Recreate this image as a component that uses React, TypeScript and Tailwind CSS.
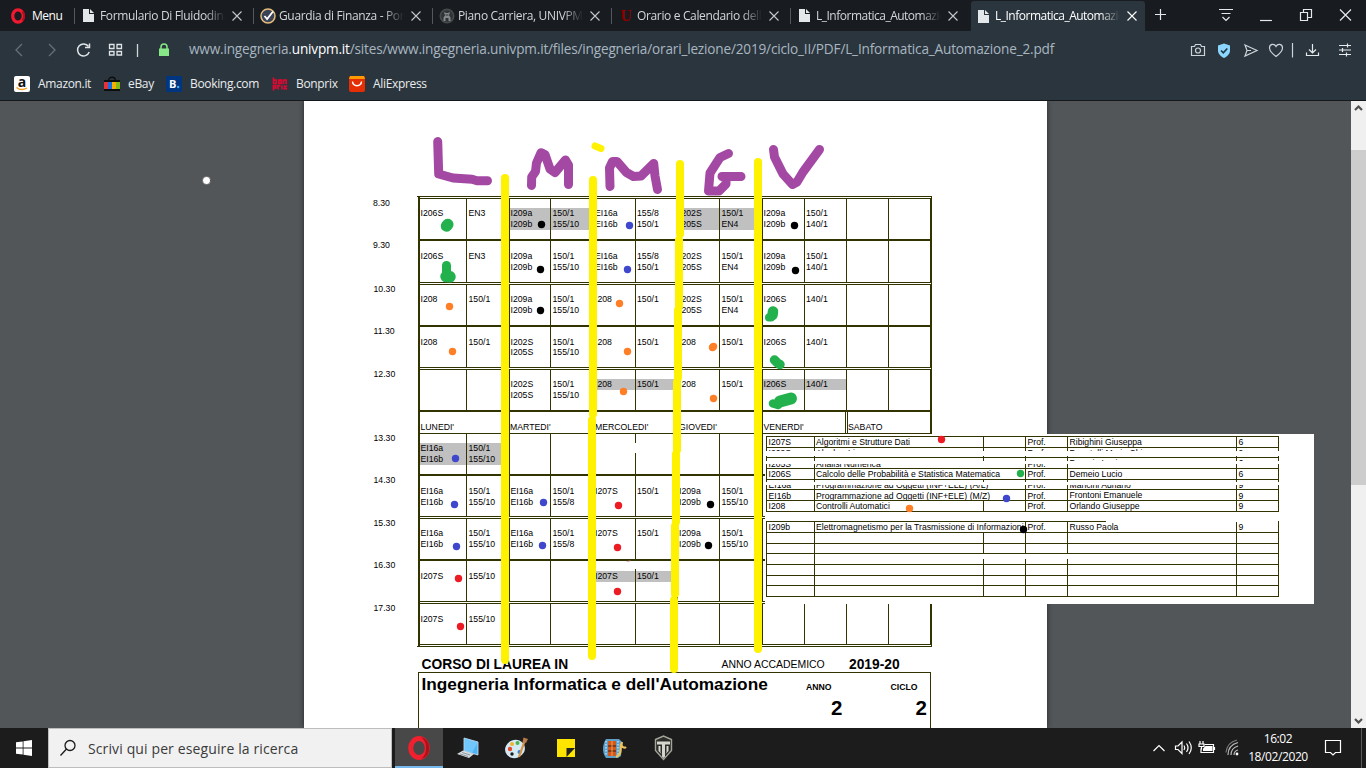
import type { ReactNode } from "react";

/* ---------- Browser chrome ---------- */

function DocIcon() {
  return (
    <svg width="14" height="15" viewBox="0 0 14 15">
      <path d="M1 1h6v5h5v8H1z" fill="#e3e7ea" />
      <path d="M8 1l4 4H8z" fill="#e3e7ea" />
    </svg>
  );
}

function GuardiaIcon() {
  return (
    <svg width="16" height="16" viewBox="0 0 16 16">
      <circle cx="8" cy="8" r="7" fill="#3b4257" stroke="#e3bd7c" strokeWidth="1.5" />
      <path d="M4.500 8l2.600 3L13 3.500" fill="none" stroke="#fff" strokeWidth="1.8" />
    </svg>
  );
}

function UnivpmIcon() {
  return (
    <svg width="16" height="16" viewBox="0 0 16 16">
      <circle cx="8" cy="8" r="7.500" fill="#46494c" />
      <circle cx="8" cy="8" r="5.800" fill="#303335" />
      <path d="M4.500 13V9.500l1.500-2L5 4l2 1h2l2-1-1 3.500 1.500 2V13h-2v-3h-3v3z" fill="#85898c" />
      <path d="M6.500 7h3" stroke="#303335" />
    </svg>
  );
}

function UIcon() {
  return <span className="block w-[14px] text-center font-['Liberation_Serif',serif] text-[16px] leading-[15px] font-bold text-[#8e0000]">U</span>;
}

function CloseX() {
  return (
    <svg width="10" height="10" viewBox="0 0 10 10" className="shrink-0">
      <path d="M.5.5l9 9M9.500.5l-9 9" stroke="currentColor" strokeWidth="1.1" fill="none" />
    </svg>
  );
}

function Tab({ icon, title, tight }: { icon: ReactNode; title: string; tight?: boolean }) {
  return (
    <div className="flex h-[31px] w-[179px] shrink-0 items-center">
      <div className="h-[16px] w-px bg-[#54585b]" />
      <div className="ml-[6px] flex w-[16px] justify-center">{icon}</div>
      <div className={`ml-[3px] w-[125px] overflow-hidden text-[12px] whitespace-nowrap text-[#d3d7da] [mask-image:linear-gradient(to_right,black_84%,transparent_100%)] ${tight ? "tracking-[-0.5px]" : "tracking-[-0.35px]"}`}>{title}</div>
      <div className="ml-[7px] text-[#c5c9cc]"><CloseX /></div>
    </div>
  );
}

function TabBar() {
  return (
    <div className="flex h-[31px] bg-[#181b1f] text-white">
      <div className="flex w-[74px] shrink-0 items-center pl-[10px] text-[12px]">
        <svg width="16" height="16" viewBox="0 0 16 16">
          <ellipse cx="8" cy="8" rx="5.300" ry="6.200" fill="none" stroke="#f0192f" strokeWidth="3.300" />
          <path d="M12.500 3.500a7 7 0 0 1 0 9" fill="none" stroke="#a8101f" strokeWidth="2" />
        </svg>
        <span className="ml-[6px] tracking-[-0.5px]">Menu</span>
      </div>
      <Tab icon={<DocIcon />} title="Formulario Di Fluidodinam" />
      <Tab icon={<GuardiaIcon />} title="Guardia di Finanza - Porta" />
      <Tab icon={<UnivpmIcon />} title="Piano Carriera, UNIVPM -" />
      <Tab icon={<UIcon />} title="Orario e Calendario delle" />
      <Tab icon={<DocIcon />} title="L_Informatica_Automazio" tight />
      <div className="mt-px ml-[2px] flex h-[30px] w-[174px] shrink-0 items-center rounded-t-[3px] bg-[#2b353d]">
        <div className="ml-[6px]"><DocIcon /></div>
        <div className="ml-[4px] w-[125px] overflow-hidden text-[12px] tracking-[-0.5px] whitespace-nowrap text-white [mask-image:linear-gradient(to_right,black_84%,transparent_100%)]">L_Informatica_Automazio</div>
        <div className="ml-[7px]"><CloseX /></div>
      </div>
      <svg width="221" height="31" viewBox="1145 0 221 31" fill="none" stroke="#e6e9eb" strokeWidth="1.200" className="shrink-0">
        <path d="M1155 14.500h11M1160.500 9v11" />
        <path d="M1219 9.500h14M1221.500 13.500h9M1222.500 17l3.500 3.500 3.500-3.500" />
        <path d="M1260 20.500h12" />
        <path d="M1300.500 12.500h7v8h-7zM1303.500 12.500v-3h8v8h-3.500" />
        <path d="M1340 9.500l11 11M1351 9.500l-11 11" />
      </svg>
    </div>
  );
}

function AddressBar() {
  return (
    <div className="flex h-[37px] items-center">
      <svg width="189" height="37" viewBox="0 31 189 37" fill="none" strokeWidth="1.300" className="shrink-0">
        <path d="M22 44l-6 6 6 6M49 44l6 6-6 6" stroke="#65707a" />
        <path d="M88.500 46.500a6 6 0 1 0 .7 5.500" stroke="#dfe5e9" strokeWidth="1.500" />
        <path d="M89.500 43.500v4h-4.500" stroke="#dfe5e9" strokeWidth="1.500" />
        <path d="M109.500 44.500h4.500v4h-4.500zM117 44.500h4.500v4H117zM109.500 51.500h4.500v3.500h-4.500zM117 51.500h4.500v3.500H117z" stroke="#dfe5e9" />
        <path d="M137.500 44v13" stroke="#cfd6db" />
        <rect x="159" y="48.500" width="10" height="7.500" fill="#86e886" />
        <path d="M161 50v-3a3 3 0 0 1 6 0v3" stroke="#86e886" strokeWidth="1.500" />
      </svg>
      <div className="w-[990px] text-[13.600px] tracking-[-0.18px] whitespace-nowrap text-[#a8b6c1]">
        www.ingegneria.<span className="text-white">univpm.it</span>/sites/www.ingegneria.univpm.it/files/ingegneria/orari_lezione/2019/ciclo_II/PDF/L_Informatica_Automazione_2.pdf
      </div>
      <svg width="187" height="37" viewBox="1179 31 187 37" fill="none" stroke="#cdd4d9" strokeWidth="1.200" className="shrink-0">
        <path d="M1191.500 46.500h3l1-2h5l1 2h3v9h-13z" />
        <circle cx="1198" cy="50.500" r="2.500" />
        <path d="M1224 43.500l6 2v5c0 3.500-3 6-6 7.500-3-1.500-6-4-6-7.500v-5z" fill="#8cd7ff" stroke="none" />
        <path d="M1221 50.500l2.300 2.300 4-4.300" stroke="#20333f" strokeWidth="1.600" />
        <path d="M1245 45l12 5.500-12 5.500 2-5.500zM1247 50.500h4" />
        <path d="M1276 56.500c-4-3-6.500-5.500-6.500-8.500 0-4.500 5-4.500 6.500-1.500 1.500-3 6.500-3 6.500 1.500 0 3-2.500 5.500-6.500 8.500z" />
        <path d="M1292.500 43v14.500" />
        <path d="M1312.500 44v8.500M1309 49.500l3.500 3.500 3.500-3.500M1306.500 52.500v3h12v-3" stroke="#e6eaed" />
        <path d="M1339 45.500h12M1339 50h12M1339 54.500h12M1347.500 43.500v4M1342.500 48v4M1346.500 52.500v4" stroke="#e6eaed" />
      </svg>
    </div>
  );
}

function Bookmarks() {
  return (
    <div className="flex h-[32px] items-center pl-[14px] text-[12px] tracking-[-0.33px] whitespace-nowrap text-[#e9eced]">
      <div className="flex w-[90px] items-center gap-[8px]">
        <svg width="16" height="16" viewBox="0 0 16 16">
          <rect width="16" height="16" rx="2" fill="#fff" />
          <text x="8" y="10.500" textAnchor="middle" fontSize="14" fontWeight="bold" fontFamily="Open Sans" letterSpacing="0" fill="#111">a</text>
          <path d="M2.500 11.500c3 2.500 7 2.500 10.500.5" stroke="#f59b1f" strokeWidth="1.400" fill="none" />
        </svg>
        <span>Amazon.it</span>
      </div>
      <div className="flex w-[62px] items-center gap-[8px]">
        <svg width="16" height="16" viewBox="0 0 16 16">
          <path d="M4.500 5c0-5 7-5 7 0" stroke="#0c0d0e" fill="none" strokeWidth="1.300" />
          <path d="M0 4h16v11H0z" fill="#0c0d0e" />
          <path d="M0 6h4v7H0z" fill="#e53238" /><path d="M4 6h4v7H4z" fill="#1c6be0" /><path d="M8 6h4v7H8z" fill="#f5af02" /><path d="M12 6h4v7h-4z" fill="#86b817" />
        </svg>
        <span>eBay</span>
      </div>
      <div className="flex w-[106px] items-center gap-[8px]">
        <svg width="16" height="16" viewBox="0 0 16 16">
          <rect width="16" height="16" rx="1.500" fill="#003580" />
          <text x="3" y="12" fontSize="11" fontWeight="bold" fontFamily="Open Sans" fill="#fff">B</text>
          <circle cx="12.200" cy="11" r="1.200" fill="#35b5f0" />
        </svg>
        <span>Booking.com</span>
      </div>
      <div className="flex w-[77px] items-center gap-[8px]">
        <svg width="16" height="16" viewBox="0 0 16 16" fill="none" stroke="#dc0a32" strokeWidth="1.700">
          <path d="M1.500 1.500v6h2.700v-3.300H1.500M6.800 4.200h2.500v3.300H6.800zM11.500 8.300V4.200h2.700v4.100" />
          <path d="M1.500 14.500v-4.800h2.300V12H1.500M6 13.500V9.700h2.500M10 9.500v4M11.800 9.500l3 4M14.800 9.500l-3 4" />
        </svg>
        <span>Bonprix</span>
      </div>
      <div className="flex items-center gap-[8px]">
        <svg width="16" height="16" viewBox="0 0 16 16">
          <rect width="16" height="16" rx="2" fill="#e62e04" />
          <path d="M1 0h14l1 3H0z" fill="#ff9900" />
          <path d="M3.500 5.500c.5 5.500 8.500 5.500 9 0" stroke="#fff" strokeWidth="1.500" fill="none" />
        </svg>
        <span>AliExpress</span>
      </div>
    </div>
  );
}

/* ---------- Timetable ---------- */

type Slot = { code: string[]; room: string[]; gray?: boolean };
type Row = { h: string; border: string; lead: string; gap?: boolean; slots: (Slot | null)[] };

const s = (code: string, room: string, gray = false): Slot => ({ code: code.split(","), room: room.split(","), gray });

const first = "border-t border-b-2 pt-[9px]";
const second = "border-b pt-[10px]";

const upper: Row[] = [
  { h: "h-[43px]", border: first, lead: "leading-[11px]", slots: [s("I206S", "EN3"), s("I209a,I209b", "150/1,155/10", true), s("EI16a,EI16b", "155/8,150/1"), s("I202S,I205S", "150/1,EN4", true), s("I209a,I209b", "150/1,140/1"), null] },
  { h: "h-[42px]", border: second, lead: "leading-[11px]", gap: true, slots: [s("I206S", "EN3"), s("I209a,I209b", "150/1,155/10"), s("EI16a,EI16b", "155/8,150/1"), s("I202S,I205S", "150/1,EN4"), s("I209a,I209b", "150/1,140/1"), null] },
  { h: "h-[43px]", border: first, lead: "leading-[11px]", slots: [s("I208", "150/1"), s("I209a,I209b", "150/1,155/10"), s("I208", "150/1"), s("I202S,I205S", "150/1,EN4"), s("I206S", "140/1"), null] },
  { h: "h-[41px]", border: second, lead: "leading-[10px]", gap: true, slots: [s("I208", "150/1"), s("I202S,I205S", "150/1,155/10"), s("I208", "150/1"), s("I208", "150/1"), s("I206S", "140/1"), null] },
  { h: "h-[43px]", border: first, lead: "leading-[11px]", slots: [null, s("I202S,I205S", "150/1,155/10"), s("I208", "150/1", true), s("I208", "150/1"), s("I206S", "140/1", true), null] },
];

const lower: Row[] = [
  { h: "h-[43px]", border: first, lead: "leading-[11px]", slots: [s("EI16a,EI16b", "150/1,155/10", true), null, null, null, null, null] },
  { h: "h-[41px]", border: second, lead: "leading-[11px]", gap: true, slots: [s("EI16a,EI16b", "150/1,155/10"), s("EI16a,EI16b", "150/1,155/8"), s("I207S", "150/1"), s("I209a,I209b", "150/1,155/10"), null, null] },
  { h: "h-[43px]", border: first, lead: "leading-[11px]", slots: [s("EI16a,EI16b", "150/1,155/10"), s("EI16a,EI16b", "150/1,155/8"), s("I207S", "150/1"), s("I209a,I209b", "150/1,155/10"), null, null] },
  { h: "h-[41px]", border: second, lead: "leading-[11px]", gap: true, slots: [s("I207S", "155/10"), null, s("I207S", "150/1", true), null, null, null] },
  { h: "h-[42px]", border: "border-t border-b pt-[10px]", lead: "leading-[11px]", gap: true, slots: [s("I207S", "155/10"), null, null, null, null, null] },
];

const codePad = ["pl-[0.5px]", "pl-[0.5px]", "pl-px", "pl-px", "pl-[0.5px]", ""];
const roomPad = ["pl-[1.5px]", "pl-[1.5px]", "pl-px", "pl-[1.5px]", "pl-px", ""];

function Half({ lines, gray, pad, border, lead }: { lines: string[]; gray?: boolean; pad: string; border: string; lead: string }) {
  return (
    <div className={`border-r border-[#333300] ${border}`}>
      {lines.map((t, i) => (
        <div key={i} className={`${pad} ${lead} ${gray ? "bg-[#c0c0c0]" : ""}`}>{t}</div>
      ))}
    </div>
  );
}

function TimeRow({ row }: { row: Row }) {
  return (
    <>
      <div className={`grid grid-cols-[47px_43px_41px_43px_42px_42px_42px_43px_42px_42px_42px_42px] ${row.h}`}>
        {row.slots.flatMap((slot, i) => [
          <Half key={`c${i}`} lines={slot ? slot.code : []} gray={slot?.gray} pad={codePad[i]} border={row.border} lead={row.lead} />,
          <Half key={`r${i}`} lines={slot ? slot.room : []} gray={slot?.gray} pad={roomPad[i]} border={row.border} lead={row.lead} />,
        ])}
      </div>
      {row.gap && <div className="h-px" />}
    </>
  );
}

function Timetable() {
  return (
    <div className="w-[514px] border-t border-r border-b border-l-2 border-[#333300]">
      <div className="h-px" />
      {upper.map((r, i) => <TimeRow key={i} row={r} />)}
      <div className="grid h-[20px] grid-cols-[89px_85px_84px_84px_84px_1px_84px] leading-[11px]">
        <div className="border-b border-[#333300] pt-[10px] pl-[0.5px]">LUNEDI'</div>
        <div className="border-b border-l border-[#333300] pt-[10px]">MARTEDI'</div>
        <div className="border-b border-[#333300] pt-[10px] pl-px">MERCOLEDI'</div>
        <div className="border-b border-[#333300] pt-[10px] pl-px">GIOVEDI'</div>
        <div className="border-x border-b border-[#333300] pt-[10px] pl-[0.5px]">VENERDI'</div>
        <div />
        <div className="border-x border-b border-[#333300] pt-[10px]">SABATO</div>
      </div>
      <div className="h-px" />
      {lower.map((r, i) => <TimeRow key={i} row={r} />)}
    </div>
  );
}

function Hours() {
  return (
    <div className="w-[114px] pl-[69px]">
      <div className="h-[42px] leading-[11px]">8.30</div>
      <div className="h-[44px] leading-[11px]">9.30</div>
      <div className="h-[42px] pl-[0.5px] leading-[11px]">10.30</div>
      <div className="h-[43px] pl-[0.5px] leading-[11px]">11.30</div>
      <div className="h-[64px] pl-[0.5px] leading-[11px]">12.30</div>
      <div className="h-[42px] pl-[0.5px] leading-[11px]">13.30</div>
      <div className="h-[43px] pl-[0.5px] leading-[11px]">14.30</div>
      <div className="h-[42px] pl-[0.5px] leading-[11px]">15.30</div>
      <div className="h-[43px] pl-[0.5px] leading-[11px]">16.30</div>
      <div className="h-[11px] pl-[0.5px] leading-[11px]">17.30</div>
    </div>
  );
}

function PdfPage() {
  return (
    <div className="ml-[304px] h-[627px] w-[743px] bg-white shadow-[0_0_5px_rgba(0,0,0,0.55)]">
      <div className="flex h-[551px] text-[8.700px] text-black">
        <div className="w-[114px] pt-[97px]"><Hours /></div>
        <div className="pt-[95px]"><Timetable /></div>
      </div>
      <div className="flex h-[20px] pt-[5px] pl-[117.500px] leading-[16px] whitespace-nowrap text-black">
        <div className="w-[300px] text-[13.800px] font-bold">CORSO DI LAUREA IN</div>
        <div className="w-[127.500px] text-[10.450px]">ANNO ACCADEMICO</div>
        <div className="text-[13.800px] font-bold">2019-20</div>
      </div>
      <div className="ml-[114px] flex h-[56px] w-[513px] border-x border-t border-[#333300] pl-[2.500px] font-bold whitespace-nowrap text-black">
        <div className="w-[384.500px] pt-[2px] text-[17.250px] leading-[19px]">Ingegneria Informatica e dell'Automazione</div>
        <div className="w-[84.500px] pt-[9px]">
          <div className="text-[8.700px] leading-[11px]">ANNO</div>
          <div className="pt-[4px] pl-[25px] text-[20.500px] leading-[22px]">2</div>
        </div>
        <div className="pt-[9px]">
          <div className="text-[8.700px] leading-[11px]">CICLO</div>
          <div className="pt-[4px] pl-[25px] text-[20.500px] leading-[22px]">2</div>
        </div>
      </div>
    </div>
  );
}

/* ---------- Course legend ---------- */

type Course = { box: string; text?: string; side?: string; cells?: [string, string, string, string]; split?: boolean; bare?: boolean };

const courses: Course[] = [
  { box: "h-[12px] border-y", text: "leading-[11px]", cells: ["I207S", "Algoritmi e Strutture Dati", "Ribighini Giuseppa", "6"], split: true },
  { box: "h-[3px]", text: "leading-[11px]", cells: ["I209S", "Algebra Lineare", "Donatelli Maria Chi", "9"], split: true },
  { box: "h-[5px]", bare: true },
  { box: "h-[2px] border-b", split: true },
  { box: "h-[3px]", text: "leading-[11px]", cells: ["", "", "Demeio Lucio", "6"], split: true },
  { box: "h-[3px]", bare: true },
  { box: "h-[5px] border-b", text: "leading-[11px] -mt-[5px]", cells: ["I205S", "Analisi Numerica", "", ""] },
  { box: "h-[11px] border-b", text: "leading-[11px]", cells: ["I206S", "Calcolo delle Probabilità e Statistica Matematica", "Demeio Lucio", "6"] },
  { box: "h-[2px]", split: true },
  { box: "h-[3px]", bare: true },
  { box: "h-[5px] border-b", text: "leading-[11px] -mt-[5px]", cells: ["EI16a", "Programmazione ad Oggetti (INF+ELE) (A/L)", "Mancini Adriano", "9"] },
  { box: "h-[11px] border-b", text: "leading-[11px] pt-px", side: "leading-[11px]", cells: ["EI16b", "Programmazione ad Oggetti (INF+ELE) (M/Z)", "Frontoni Emanuele", "9"] },
  { box: "h-[11px] border-b", text: "leading-[11px]", cells: ["I208", "Controlli Automatici", "Orlando Giuseppe", "9"], split: true },
  { box: "h-[9px]", bare: true },
  { box: "h-[12px] border-y", text: "leading-[11px]", cells: ["I209b", "Elettromagnetismo per la Trasmissione di Informazioni", "Russo Paola", "9"] },
  { box: "h-[11px] border-b", split: true },
  { box: "h-[10px] border-b", split: true },
  { box: "h-[11px] border-b", split: true },
  { box: "h-[11px] border-b", split: true },
  { box: "h-[10px] border-b", split: true },
  { box: "h-[11px] border-b", split: true },
];

function CourseRow({ c }: { c: Course }) {
  if (c.bare) return <div className={c.box} />;
  const t = c.text ?? "";
  const v = c.cells ?? ["", "", "", ""];
  return (
    <div className={`grid w-[513px] grid-cols-[48px_169px_42px_42px_169px_43px] overflow-hidden border-[#333300] whitespace-nowrap ${c.box}`}>
      <div className="border-l border-[#333300]"><div className={`pl-[1.500px] ${t}`}>{v[0]}</div></div>
      <div className="border-l border-[#333300]"><div className={`pl-px ${t}`}>{v[1]}</div></div>
      <div className={c.split ? "border-l border-[#333300]" : ""} />
      <div className="border-l border-[#333300] bg-white"><div className={`pl-[1.500px] ${t}`}>{v[0] ? "Prof." : ""}</div></div>
      <div className="border-l border-[#333300]"><div className={`pl-[1.500px] ${c.side ?? t}`}>{v[2]}</div></div>
      <div className="border-x border-[#333300]"><div className={`pl-[1.500px] ${t}`}>{v[3]}</div></div>
    </div>
  );
}

function Legend() {
  return (
    <div className="absolute top-[333px] left-[765px] h-[170px] w-[549px] bg-white pt-[2px] pl-px text-[8.650px] text-black">
      {courses.map((c, i) => <CourseRow key={i} c={c} />)}
    </div>
  );
}

/* ---------- Hand-drawn marks ---------- */

const dots: [string, number[][]][] = [
  ["#000000", [[541.5, 224.5], [540.5, 269.5], [540.5, 310.5], [794.5, 225.5], [795.5, 270.5], [710.5, 504.5], [708.5, 545.5], [1023.5, 529.5]]],
  ["#3f48cc", [[629.5, 225.5], [627.5, 269.5], [455.5, 458.5], [454.5, 504.5], [543.5, 502.5], [456.5, 546.5], [542.5, 545.5], [1006.5, 498.5]]],
  ["#ff7f27", [[449.5, 306.5], [619.5, 303.5], [452.5, 351.5], [627.5, 351.5], [712.5, 347.5], [713.5, 346.5], [623.5, 391.5], [713.5, 398.5], [909.5, 508.5]]],
  ["#ed1c24", [[618.5, 505.5], [617.5, 547.5], [617.5, 591.5], [458.5, 578.5], [460.5, 626.5], [941.5, 439.5]]],
  ["#22b14c", [[1020.5, 473.5]]],
];

function Marks() {
  return (
    <svg className="absolute top-0 left-0" width="1351" height="627" viewBox="0 101 1351 627" fill="none" strokeLinecap="round" strokeLinejoin="round">
      <g fill="#ffffff">
        <rect x="635" y="443" width="1" height="10" />
        <rect x="635" y="561" width="1" height="8" />
        <rect x="983" y="554" width="1" height="5" />
        <rect x="1025" y="554" width="1" height="5" />
        <rect x="1067" y="554" width="1" height="5" />
        <rect x="1106" y="521" width="172" height="1" />
      </g>
      <path d="M417 196.500h2M417 646.500h2" stroke="#333300" strokeLinecap="butt" />
      <path d="M627 561.500l3-.5" stroke="#d9958c" strokeWidth=".8" />
      <g stroke="#fff200" strokeWidth="8">
        <path d="M505 178V660" />
        <path d="M593 180V414M592 420V656" />
        <path d="M680 164V234M679 240V306M678 310V378M677 382V450M676 454V522M675 526V594M674 600V669" />
        <path d="M758 162V649" />
        <path d="M595 146l6 2.500" strokeWidth="7" />
      </g>
      <g stroke="#a349a4" strokeWidth="9">
        <path d="M437.700 141.500L438.700 174L444 175.500L453 178L472 179.300L477 180.800H487.500" />
        <path d="M531.500 185.500L531.700 177L535.500 171.500L536.500 163L541 152.700L545 154.500L550 169L555 172.500L565.500 160L568.500 165V184.500" />
        <path d="M610 186.500L609.500 168L612.500 161.500L617 161.500L626.500 172.500L633.500 176.500L641 176L653.700 163.500L655 176L657.500 189.500" />
        <path d="M728.500 153.500L720 157.500L710 173L708.500 191H719L726 184V177L722 176.500H741" />
        <path d="M773.500 149.500L774.500 157L783 174L792.500 184.500L797 182L803 172L819.500 149.500" />
      </g>
      <g stroke="#22b14c">
        <path d="M446.500 226l1.300-1.500" strokeWidth="11.500" />
        <path d="M446.500 265.500v9" strokeWidth="9" />
        <path d="M446 276.500l4 .3" strokeWidth="11.500" />
        <path d="M773 311.500l-.5 3.500" strokeWidth="10.500" />
        <path d="M769 317.500h2" strokeWidth="8" />
        <path d="M774.500 360l3 3M779 364l1 .5" strokeWidth="9.500" />
        <path d="M773 403.500l5 1.500" strokeWidth="8.500" />
        <path d="M780 401.500l11-3" strokeWidth="12" />
      </g>
      {dots.map(([color, pts]) => pts.map(([x, y]) => <circle key={`${x}-${y}`} cx={x} cy={y} r="3.700" fill={color} />))}
      <circle cx="206.500" cy="180.500" r="4" fill="#fff" stroke="#3f4245" strokeWidth=".6" />
    </svg>
  );
}

function Scrollbar() {
  return (
    <div className="flex h-[627px] w-[15px] flex-col items-center bg-[#f0f0f0]">
      <svg width="15" height="49" viewBox="0 0 15 49"><path d="M4 9l3.500-3.500L11 9" fill="none" stroke="#505050" strokeWidth="2.200" /></svg>
      <div className="h-[335px] w-[15px] bg-[#cdcdcd]" />
      <div className="grow" />
      <svg width="15" height="15" viewBox="0 0 15 15"><path d="M4 6l3.500 3.500L11 6" fill="none" stroke="#505050" strokeWidth="2.200" /></svg>
    </div>
  );
}

/* ---------- Taskbar ---------- */

function Taskbar() {
  return (
    <div className="flex h-[40px] bg-[#1c1c1c] font-['Open_Sans',sans-serif]">
      <div className="flex w-[48px] items-center justify-center">
        <svg width="16" height="16" viewBox="0 0 16 16" fill="#fff"><path d="M0 2.300l6.700-.9v6.200H0zM7.500 1.300L16 .1v7.500H7.500zM0 8.400h6.700v6.200L0 13.700zM7.500 8.400H16v7.500l-8.500-1.200z" /></svg>
      </div>
      <div className="flex w-[344px] items-center border border-[#bdbdbd] bg-[#f1f1f1]">
        <svg width="18" height="18" viewBox="0 0 18 18" className="ml-[10px]" fill="none" stroke="#1a1a1a" strokeWidth="1.300"><circle cx="11" cy="6.500" r="5" /><path d="M7.500 10L1.500 16.500" /></svg>
        <span className="ml-[11px] text-[15px] tracking-[-0.310px] text-[#3a3a3a]"><span className="text-[14px] tracking-[0.120px]">Scrivi qui per eseguire la ricerca</span></span>
      </div>
      <div className="ml-[3px] flex w-[48px] items-center justify-center border-b-2 border-[#76b9ed] bg-[#484848] pt-[2px]">
        <svg width="24" height="24" viewBox="0 0 24 24"><ellipse cx="12" cy="12" rx="8.300" ry="9.500" fill="none" stroke="#f0202f" strokeWidth="5" /><path d="M14 1.200c11 1.500 11 20 0 21.600 4-3 5-6.500 5-10.800s-1-7.800-5-10.800z" fill="#b01019" /></svg>
      </div>
      <svg width="240" height="40" viewBox="443 728 240 40">
        <path d="M464 738l14 4v13l-14-4z" fill="#4db4f5" stroke="#d7e6f0" strokeWidth=".8" />
        <path d="M464 738l14 4-6 11-8-2z" fill="#8bd2ff" opacity=".6" />
        <path d="M457 754l6-3.500 11 3.500-5 4z" fill="#d4dade" /><path d="M460 754l8 2.500M462 752.500l8 2.500" stroke="#80898f" strokeWidth=".8" />
        <ellipse cx="515" cy="749" rx="10" ry="9" fill="#d5e9f5" transform="rotate(-20 515 749)" />
        <circle cx="510" cy="749" r="2.200" fill="#e24a2e" /><circle cx="512" cy="744" r="2" fill="#f3b32c" /><circle cx="517.500" cy="743" r="2" fill="#4db34a" /><circle cx="519.500" cy="752" r="2" fill="#397fd0" /><circle cx="512" cy="754" r="1.700" fill="#1c1c1c" />
        <path d="M525 740l-6 17" stroke="#d79445" strokeWidth="2.200" /><path d="M522.500 742l1-4.500 4.500 1.500-2 4z" fill="#b87a48" />
        <path d="M557 739h18v18h-18z" fill="#ffe400" /><path d="M575 748l-8.500 0v9z" fill="#222" />
        <path d="M606 739h13l3 3-1 14-3 2h-12c-4-5-4-13 0-19z" fill="#5e9fc8" /><path d="M608 741h8v15h-8z" fill="#d2581d" /><path d="M608 746h8M608 751h8" stroke="#3b1c12" strokeWidth="1.200" /><path d="M612 741v15" stroke="#f3a44d" />
        <path d="M606 741v15M618 741v14" stroke="#d8edf6" strokeWidth="1.200" strokeDasharray="1.500 1.500" /><path d="M622 742c-2 6 3 6 4 5M621 744c-1 7 1 10-5 13" stroke="#eec35e" strokeWidth="2.200" fill="none" />
        <path d="M655.500 739.500l8-3.500 8 3.500v11l-8 9-8-9z" fill="#2c2c28" stroke="#a5a49a" strokeWidth="1.400" />
        <path d="M657 741.500h13v3h-5v12l-1.500 1.500-1.500-1.500v-12h-5zM658.500 746h2v6l1 2-3-3zM668.500 746h-2v6l-1 2 3-3z" fill="#d7d6ce" />
      </svg>
      <div className="grow" />
      <svg width="106" height="40" viewBox="1142 728 106 40" fill="none" stroke="#fff" strokeWidth="1.200" className="shrink-0">
        <path d="M1153.500 751l5.500-5.500 5.500 5.500" />
        <path d="M1175.500 746h2.500l4-4v11.500l-4-4h-2.500zM1184 745.500q1.500 2.300 0 4.500M1186.500 743.500q3 4.300 0 8.500M1189 741.500q4.500 6.300 0 12.500" />
        <path d="M1204.500 744.500h9v8h-12.500v-4M1214.500 747v3" /><path d="M1205.500 746h7v5h-9.500v-2.500z" fill="#fff" stroke="none" /><path d="M1200 741v3M1203 741v3M1199 744h5v2.500h-5zM1201.500 746.500v3" />
        <path d="M1228 755q0-10 10-12.500M1231 755q0-7 7-9M1234 755q0-4 4-5" stroke="#bdbdbd" /><path d="M1226 752.500q1-10 11-12.500" stroke="#777" /><circle cx="1237" cy="754" r="1.400" fill="#fff" stroke="none" />
      </svg>
      <div className="flex w-[60px] flex-col items-center pt-[2px] text-[12px] leading-[18px] tracking-[-0.4px] text-white">
        <span>16:02</span>
        <span>18/02/2020</span>
      </div>
      <svg width="58" height="40" viewBox="1308 728 58 40" fill="none" stroke="#fff" strokeWidth="1.200" className="shrink-0">
        <path d="M1325.500 740.500h15v12h-5l-2.500 2.500-2.500-2.500h-5z" />
        <path d="M1361.500 728v40" stroke="#5a5a5a" strokeWidth="1" />
      </svg>
    </div>
  );
}

export default function App() {
  return (
    <div className="flex h-[768px] w-[1366px] flex-col overflow-hidden bg-[#525659] font-['Open_Sans',sans-serif]">
      <TabBar />
      <div className="h-[70px] border-b border-[#14181b] bg-[#2b353d]">
        <AddressBar />
        <Bookmarks />
      </div>
      <div className="relative flex h-[627px] shrink-0 overflow-hidden font-['Liberation_Sans',Arial,sans-serif]">
        <div className="w-[1351px] shrink-0"><PdfPage /></div>
        <Scrollbar />
        <Legend />
        <Marks />
      </div>
      <Taskbar />
    </div>
  );
}
